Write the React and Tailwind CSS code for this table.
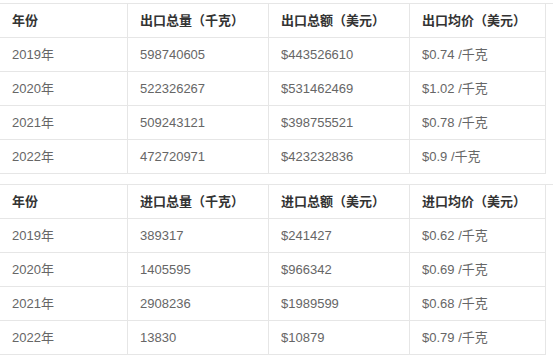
import React from 'react';

const exportRows = [
    ['2019年', '598740605', '$443526610', '$0.74 /千克'],
    ['2020年', '522326267', '$531462469', '$1.02 /千克'],
    ['2021年', '509243121', '$398755521', '$0.78 /千克'],
    ['2022年', '472720971', '$423232836', '$0.9 /千克'],
];

const importRows = [
    ['2019年', '389317', '$241427', '$0.62 /千克'],
    ['2020年', '1405595', '$966342', '$0.69 /千克'],
    ['2021年', '2908236', '$1989599', '$0.68 /千克'],
    ['2022年', '13830', '$10879', '$0.79 /千克'],
];

const TradeTable = ({ head, rows }) => (
    <div className='grid grid-cols-[128px_141px_141px_136px] border-t border-[#e6e6e6]'>
        {head.map((h) => (
            <div key={h} className='h-[34px] flex items-center pl-[12px] border-b border-r border-[#e6e6e6] text-[13px] font-bold text-[#333]'>
                {h}
            </div>
        ))}
        {rows.map((row, i) =>
            row.map((cell, j) => (
                <div key={i + '-' + j} className='h-[34px] flex items-center pl-[12px] border-b border-r border-[#e6e6e6] text-[13px] text-[#666]'>
                    {cell}
                </div>
            ))
        )}
    </div>
);

export default function App() {
    return (
        <div
            className='w-[553px] h-[363px] bg-white pt-[3px] flex flex-col gap-[10px] overflow-hidden'
            style={{ fontFamily: '"Liberation Sans", "Noto Sans CJK SC", sans-serif' }}
        >
            <TradeTable head={['年份', '出口总量（千克）', '出口总额（美元）', '出口均价（美元）']} rows={exportRows} />
            <TradeTable head={['年份', '进口总量（千克）', '进口总额（美元）', '进口均价（美元）']} rows={importRows} />
        </div>
    );
}
